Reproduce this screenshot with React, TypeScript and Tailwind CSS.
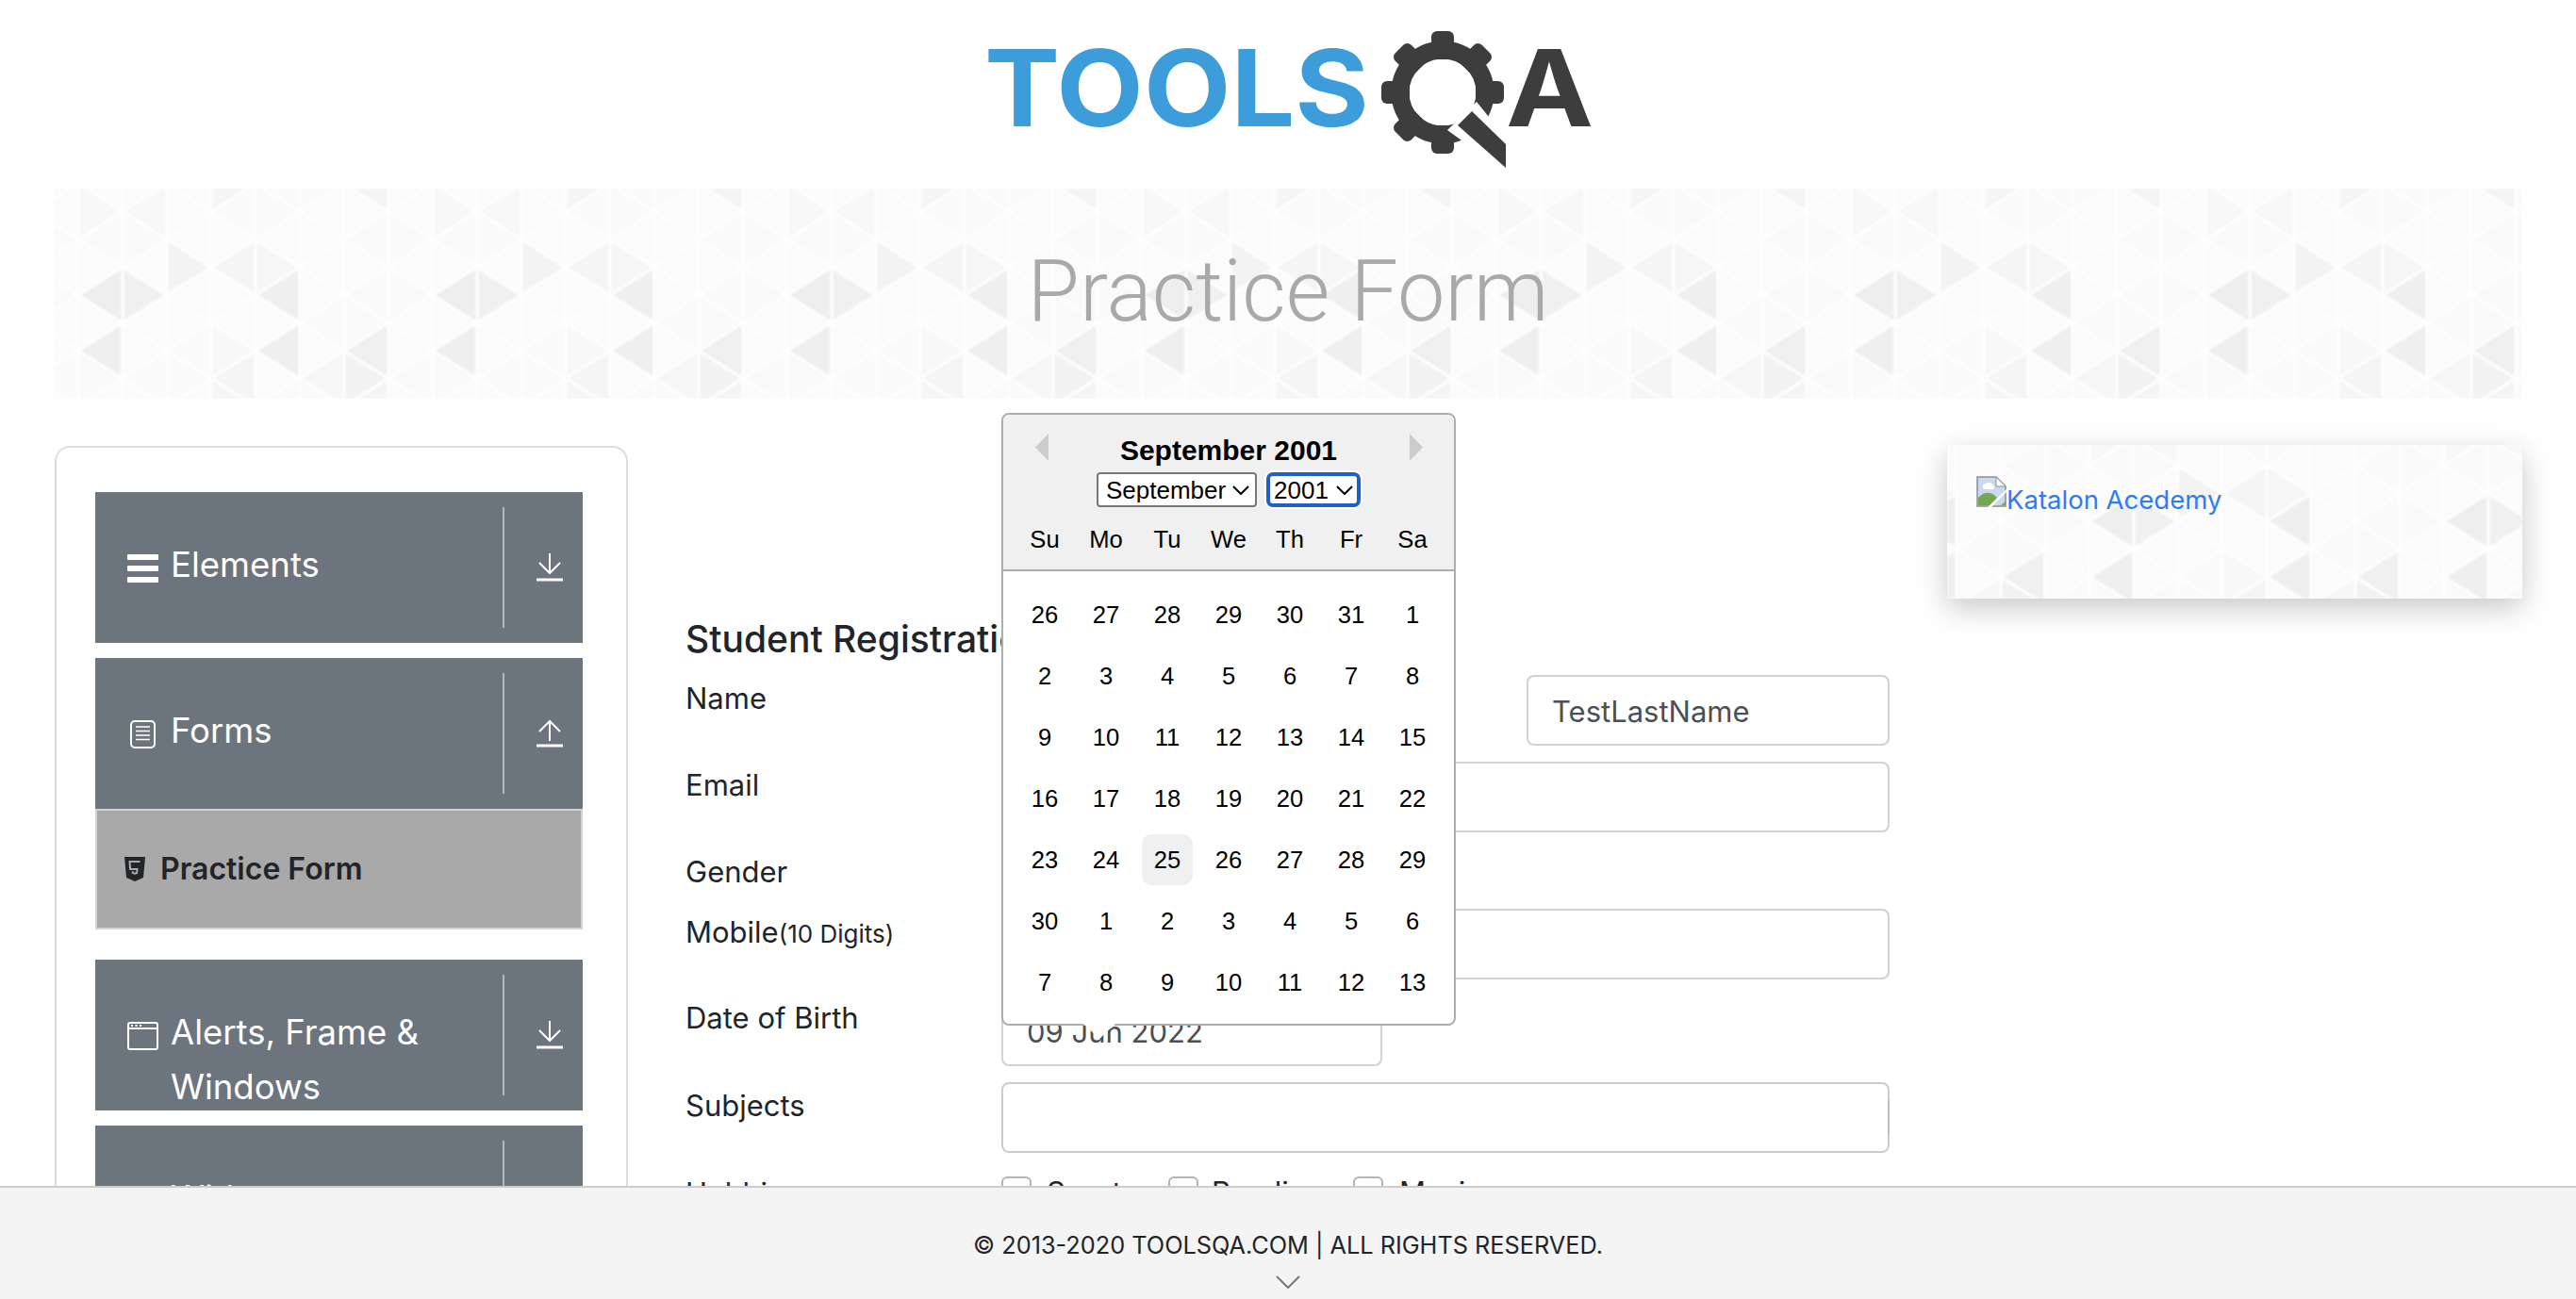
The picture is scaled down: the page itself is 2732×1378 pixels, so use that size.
import type { ReactNode } from "react";

const MONTHS = ["January", "February", "March", "April", "May", "June", "July", "August", "September", "October", "November", "December"];
const DAY_NAMES = ["Su", "Mo", "Tu", "We", "Th", "Fr", "Sa"];
const DAYS = [
  26, 27, 28, 29, 30, 31, 1,
  2, 3, 4, 5, 6, 7, 8,
  9, 10, 11, 12, 13, 14, 15,
  16, 17, 18, 19, 20, 21, 22,
  23, 24, 25, 26, 27, 28, 29,
  30, 1, 2, 3, 4, 5, 6,
  7, 8, 9, 10, 11, 12, 13,
];

// darker triangles of the background, keyed by column, row and direction
const SHADES: Record<string, string> = {
  "0,0,L": "#eeeeee", "0,0,R": "#f0f0f0", "0,1,L": "#efefef",
  "4,0,L": "#efefef", "4,1,L": "#efefef", "6,1,L": "#f0f0f0",
  "5,2,R": "#f2f2f2", "5,2,L": "#f6f6f6", "3,2,L": "#f5f5f5",
  "1,0,R": "#f3f3f3", "3,0,L": "#f5f5f5", "3,0,R": "#f6f6f6",
  "6,2,L": "#f4f4f4", "2,2,R": "#f5f5f5", "2,1,R": "#f8f8f8",
  "7,3,R": "#f8f8f8", "1,3,L": "#f8f8f8",
};

function TrianglePattern({ width, height, x0, y0 }: { width: number; height: number; x0: number; y0: number }) {
  const cells = [];
  for (let c = -10; c * 47 + x0 < width + 50; c++) {
    for (let j = -4; j * 59 + y0 < height + 60; j++) {
      const cx = x0 + 47 * c;
      const odd = ((c % 2) + 2) % 2 === 1;
      const cy = y0 + 59 * j - (odd ? 29.5 : 0);
      const col = ((c % 8) + 8) % 8;
      const row = ((j % 4) + 4) % 4;
      for (const d of ["L", "R"]) {
        const ax = d === "L" ? cx - 47 : cx + 47;
        const fill = SHADES[`${col},${row},${d}`] ?? ((col + row) % 3 === 0 ? "#fafafa" : "#fbfbfb");
        cells.push(<polygon key={`${c}-${j}-${d}`} points={`${cx},${cy - 29.5} ${cx},${cy + 29.5} ${ax},${cy}`} fill={fill} />);
      }
    }
  }
  return (
    <div className="absolute inset-0 overflow-hidden bg-[#fbfbfb]">
      <svg className="blur-[1px]" width={width} height={height} stroke="#fefefe" strokeWidth="3" strokeLinejoin="round">
        {cells}
      </svg>
    </div>
  );
}

function Logo() {
  const teeth = [0, 45, 90, 135, 180, 225, 270, 315];
  return (
    <svg width="668" height="160" viewBox="1032 25 668 160" role="img" aria-label="TOOLSQA">
      <text x="1044" y="134" textLength="408" lengthAdjust="spacingAndGlyphs" fontSize="113" fontWeight="700" fill="#3d9ddb" className="font-['Inter',sans-serif]">
        TOOLS
      </text>
      {teeth.map((a) => (
        <rect key={a} x="1518" y="33" width="24" height="30" rx="6" fill="#3d3d3d" transform={`rotate(${a} 1530 98)`} />
      ))}
      <ellipse cx="1530" cy="98" rx="45" ry="45" fill="none" stroke="#3d3d3d" strokeWidth="19" />
      <polygon points="1535,138 1566,108 1600,150 1600,185" fill="#ffffff" />
      <polygon points="1546,133 1561,118 1597,153 1597,178" fill="#3d3d3d" />
      <text x="1597" y="134" textLength="93" lengthAdjust="spacingAndGlyphs" fontSize="113" fontWeight="700" fill="#3d3d3d" className="font-['Inter',sans-serif]">
        A
      </text>
    </svg>
  );
}

function BarsIcon() {
  return (
    <svg width="33" height="30" viewBox="0 0 33 30" fill="#ffffff">
      <rect y="0" width="33" height="6" rx="1" />
      <rect y="12" width="33" height="6" rx="1" />
      <rect y="24" width="33" height="6" rx="1" />
    </svg>
  );
}

function DocIcon() {
  return (
    <svg width="33" height="30" viewBox="0 0 33 30" fill="none" stroke="#ffffff" strokeWidth="2">
      <rect x="4" y="1" width="25" height="28" rx="4" />
      <path d="M9 7h15M9 11.500h15M9 16h15M9 20.500h15" strokeWidth="1.500" />
    </svg>
  );
}

function WindowIcon() {
  return (
    <svg width="33" height="30" viewBox="0 0 33 30" fill="none" stroke="#ffffff" strokeWidth="2">
      <rect x="1" y="1" width="31" height="28" rx="2" />
      <path d="M1 7h31" />
      <path d="M4 4h2M8.500 4h2M13 4h2" strokeWidth="2" />
    </svg>
  );
}

function ArrowIcon({ up }: { up?: boolean }) {
  return (
    <svg width="28" height="30" viewBox="0 0 28 30" fill="none" stroke="#ffffff" strokeWidth="2">
      {up ? <path d="M14 23V2M3 13 14 2l11 11" /> : <path d="M14 0v21M3 10l11 11 11-11" />}
      <path d="M0 28h28" strokeWidth="3" />
    </svg>
  );
}

function Html5Icon() {
  return (
    <svg width="22" height="26" viewBox="0 0 22 26" className="shrink-0">
      <path d="M0 0h22l-2 22-9 4-9-4z" fill="#212529" />
      <path d="M16.500 5h-11l.6 8h7.400l-.3 4-2.200.8-2.200-.8-.1-1.700" fill="none" stroke="#a9a9a9" strokeWidth="2" />
    </svg>
  );
}

function BrokenImage() {
  return (
    <svg width="32" height="33" viewBox="0 0 32 33" className="shrink-0">
      <path d="M1 1h20l10 10v21H1z" fill="#c9d9f2" stroke="#8e8e8e" strokeWidth="1.500" />
      <path d="M21 1v10h10z" fill="#ffffff" stroke="#8e8e8e" strokeWidth="1" />
      <path d="M7 12a3 3 0 0 1 3-4 5 5 0 0 1 8 2 2.500 2.500 0 0 1 0 4H8a2 2 0 0 1-1-2z" fill="#ffffff" />
      <path d="M2 31v-8c6-7 14-7 20 0l-7 8z" fill="#74a84f" />
      <path d="M31 27v4h-5z" fill="#74a84f" />
      <path d="M16 33 32 17v-3L12 33z" fill="#ffffff" />
    </svg>
  );
}

function SideGroup({ icon, label, up }: { icon?: ReactNode; label: string; up?: boolean }) {
  return (
    <div className="flex h-[160px] overflow-hidden bg-[#6c757d] text-white">
      <div className="flex flex-1 items-start pl-[34px] pt-[48px]">
        <span className="mt-[18px] w-[33px] shrink-0">{icon}</span>
        <span className="ml-[13px] text-[36.500px] leading-[58px]">{label}</span>
      </div>
      <div className="my-[16px] flex w-[85px] shrink-0 items-center border-l-2 border-[#b4b8bc] pl-[34px]">
        <ArrowIcon up={up} />
      </div>
    </div>
  );
}

function Sidebar() {
  return (
    <aside className="ml-[58px] w-[608px] shrink-0 rounded-t-2xl border-2 border-b-0 border-[#dddddd] pl-[41px] pr-[46px] pt-[47px]">
      <div className="flex flex-col">
        <SideGroup icon={<BarsIcon />} label="Elements" />
        <div className="mt-[16px]">
          <SideGroup icon={<DocIcon />} label="Forms" up />
        </div>
        <div className="flex h-[128px] items-center gap-[16px] border-2 border-[#ced4da] bg-[#a9a9a9] pl-[29px] text-[32px] font-semibold text-[#212529]">
          <Html5Icon />
          Practice Form
        </div>
        <div className="mt-[32px]">
          <SideGroup icon={<WindowIcon />} label="Alerts, Frame & Windows" />
        </div>
        <div className="mt-[16px]">
          <SideGroup label="Widgets" />
        </div>
      </div>
    </aside>
  );
}

function Chevron() {
  return (
    <svg width="18" height="10" viewBox="0 0 18 10" fill="none" stroke="#000000" strokeWidth="2" className="pointer-events-none absolute top-[14px]">
      <path d="M1 1l8 8 8-8" />
    </svg>
  );
}

function Calendar() {
  return (
    <div className="absolute bottom-[43px] left-0 z-10 w-[482px] rounded-lg border-2 border-[#aeaeae] bg-white font-['Liberation_Sans',Arial,sans-serif] text-black">
      <div className="relative rounded-t-lg border-b-2 border-[#aeaeae] bg-[#f0f0f0] pb-[17px] pt-[21px]">
        <svg width="14" height="29" viewBox="0 0 14 29" className="absolute left-[34px] top-[20px]" fill="#cccccc">
          <path d="M14 0v29L0 14.500z" />
        </svg>
        <svg width="14" height="29" viewBox="0 0 14 29" className="absolute right-[33px] top-[20px]" fill="#cccccc">
          <path d="M0 0v29l14-14.500z" />
        </svg>
        <div className="text-center text-[30px] font-bold leading-[34px]">September 2001</div>
        <div className="mt-[6px] flex justify-center gap-[10px]">
          <div className="relative">
            <select defaultValue="September" className="h-[37px] w-[170px] appearance-none rounded border-2 border-[#767676] bg-white pl-[8px] text-[26px] leading-none outline-none">
              {MONTHS.map((m) => (
                <option key={m}>{m}</option>
              ))}
            </select>
            <span className="absolute right-[26px] top-0"><Chevron /></span>
          </div>
          <div className="relative">
            <select defaultValue="2001" className="h-[37px] w-[100px] appearance-none rounded-[7px] border-4 border-[#2160c4] bg-white pl-[4px] text-[26px] leading-none outline-none ring-2 ring-white">
              <option>2000</option>
              <option>2001</option>
              <option>2002</option>
            </select>
            <span className="absolute right-[26px] top-0"><Chevron /></span>
          </div>
        </div>
        <div className="mt-[19px] grid grid-cols-7 gap-x-[11px] px-[17px] text-center text-[25.600px] leading-[30px]">
          {DAY_NAMES.map((d) => (
            <div key={d}>{d}</div>
          ))}
        </div>
      </div>
      <div className="grid grid-cols-7 gap-[11px] px-[17px] pb-[17px] pt-[19px] text-[25.600px]">
        {DAYS.map((d, i) => (
          <div key={i} className={`flex h-[54px] items-center justify-center rounded-[10px] ${i === 30 ? "bg-[#f0f0f0]" : ""}`}>
            {d}
          </div>
        ))}
      </div>
      <svg width="36" height="17" viewBox="0 0 36 17" className="absolute left-[84px] top-[calc(100%-1px)]">
        <path d="M0 0h36L18 17z" fill="#ffffff" />
      </svg>
    </div>
  );
}

const inputClass = "h-[75px] rounded-lg border-2 border-[#ced4da] bg-white px-[25px] pt-[2px] text-[31px] text-[#495057] outline-none";

function FormRow({ label, children, className }: { label: ReactNode; children: ReactNode; className?: string }) {
  return (
    <div className={`flex items-start ${className ?? ""}`}>
      <label className="w-[335px] shrink-0 pt-[1px] text-[31px] leading-[48px] text-[#212529]">{label}</label>
      <div className="flex flex-1 gap-[172px]">{children}</div>
    </div>
  );
}

function StudentForm() {
  return (
    <section className="ml-[61px] w-[1277px] shrink-0 pt-[181px]">
      <h5 className="mb-[14px] text-[39px] font-medium leading-[48px] text-[#212529]">Student Registration Form</h5>
      <FormRow label="Name" className="mb-[17px]">
        <input className={`${inputClass} w-[385px]`} readOnly />
        <input className={`${inputClass} w-[385px]`} value="TestLastName" readOnly />
      </FormRow>
      <FormRow label="Email" className="mb-[17px]">
        <input className={`${inputClass} flex-1`} readOnly />
      </FormRow>
      <FormRow label="Gender" className="mb-[17px] h-[47px]">
        <span />
      </FormRow>
      <FormRow
        label={
          <>
            Mobile<small className="text-[26px]">(10 Digits)</small>
          </>
        }
        className="mb-[16px]"
      >
        <input className={`${inputClass} flex-1`} readOnly />
      </FormRow>
      <FormRow label="Date of Birth" className="mb-[17px]">
        <div className="relative h-[76px] w-[404px]">
          <input className={`${inputClass} h-[76px] w-full`} value="09 Jun 2022" readOnly />
          <Calendar />
        </div>
      </FormRow>
      <FormRow label="Subjects" className="mb-[18px]">
        <div className="relative h-[75px] flex-1 rounded-lg border-2 border-[#cccccc]">
          <span className="absolute right-[-2px] top-[17px] h-[36px] w-[2px] bg-[#bbbbbb]" />
        </div>
      </FormRow>
      <FormRow label="Hobbies">
        <div className="flex items-start text-[31px] leading-[48px] text-[#212529]">
          <input type="checkbox" className="mt-[7px] h-[32px] w-[32px] appearance-none rounded-md border-2 border-[#adb5bd] bg-white" />
          <span className="ml-[16px] w-[129px]">Sports</span>
          <input type="checkbox" className="mt-[7px] h-[32px] w-[32px] appearance-none rounded-md border-2 border-[#adb5bd] bg-white" />
          <span className="ml-[14px] w-[150px]">Reading</span>
          <input type="checkbox" className="mt-[7px] h-[32px] w-[32px] appearance-none rounded-md border-2 border-[#adb5bd] bg-white" />
          <span className="ml-[17px]">Music</span>
        </div>
      </FormRow>
    </section>
  );
}

function AdBox() {
  return (
    <div className="relative ml-[61px] mt-[-1px] h-[163px] w-[610px] shrink-0 shadow-[0_10px_30px_rgba(0,0,0,0.22)]">
      <TrianglePattern width={610} height={163} x0={198} y0={81} />
      <a href="#" className="relative flex items-start pl-[31px] pt-[33px] text-[27.500px] leading-[48px] text-[#2f7bf6]">
        <BrokenImage />
        <span className="mt-[1px]">Katalon Acedemy</span>
      </a>
    </div>
  );
}

export default function App() {
  return (
    <div className="flex h-[1378px] flex-col overflow-hidden bg-white font-['Inter',sans-serif]">
      <main className="min-h-0 flex-1 overflow-hidden">
        <header className="flex h-[200px] justify-center pt-[25px]">
          <Logo />
        </header>
        <div className="relative mx-[57px] flex h-[223px] items-center justify-center overflow-hidden">
          <TrianglePattern width={2618} height={223} x0={73} y0={113} />
          <h1 className="relative mt-[-4px] font-['Roboto',sans-serif] text-[90px] font-light text-[#a9a9a9]">Practice Form</h1>
        </div>
        <div className="mt-[50px] flex items-start">
          <Sidebar />
          <StudentForm />
          <AdBox />
        </div>
      </main>
      <footer className="flex h-[120px] shrink-0 flex-col items-center border-t-2 border-[#cccccc] bg-[#f4f4f4] pt-[44px] text-[#212529]">
        <span className="text-[25.300px] leading-[34px]">© 2013-2020 TOOLSQA.COM | ALL RIGHTS RESERVED.</span>
        <svg width="26" height="14" viewBox="0 0 26 14" fill="none" stroke="#777777" strokeWidth="2" className="mt-[15px]">
          <path d="M1 1l12 12L25 1" />
        </svg>
      </footer>
    </div>
  );
}
